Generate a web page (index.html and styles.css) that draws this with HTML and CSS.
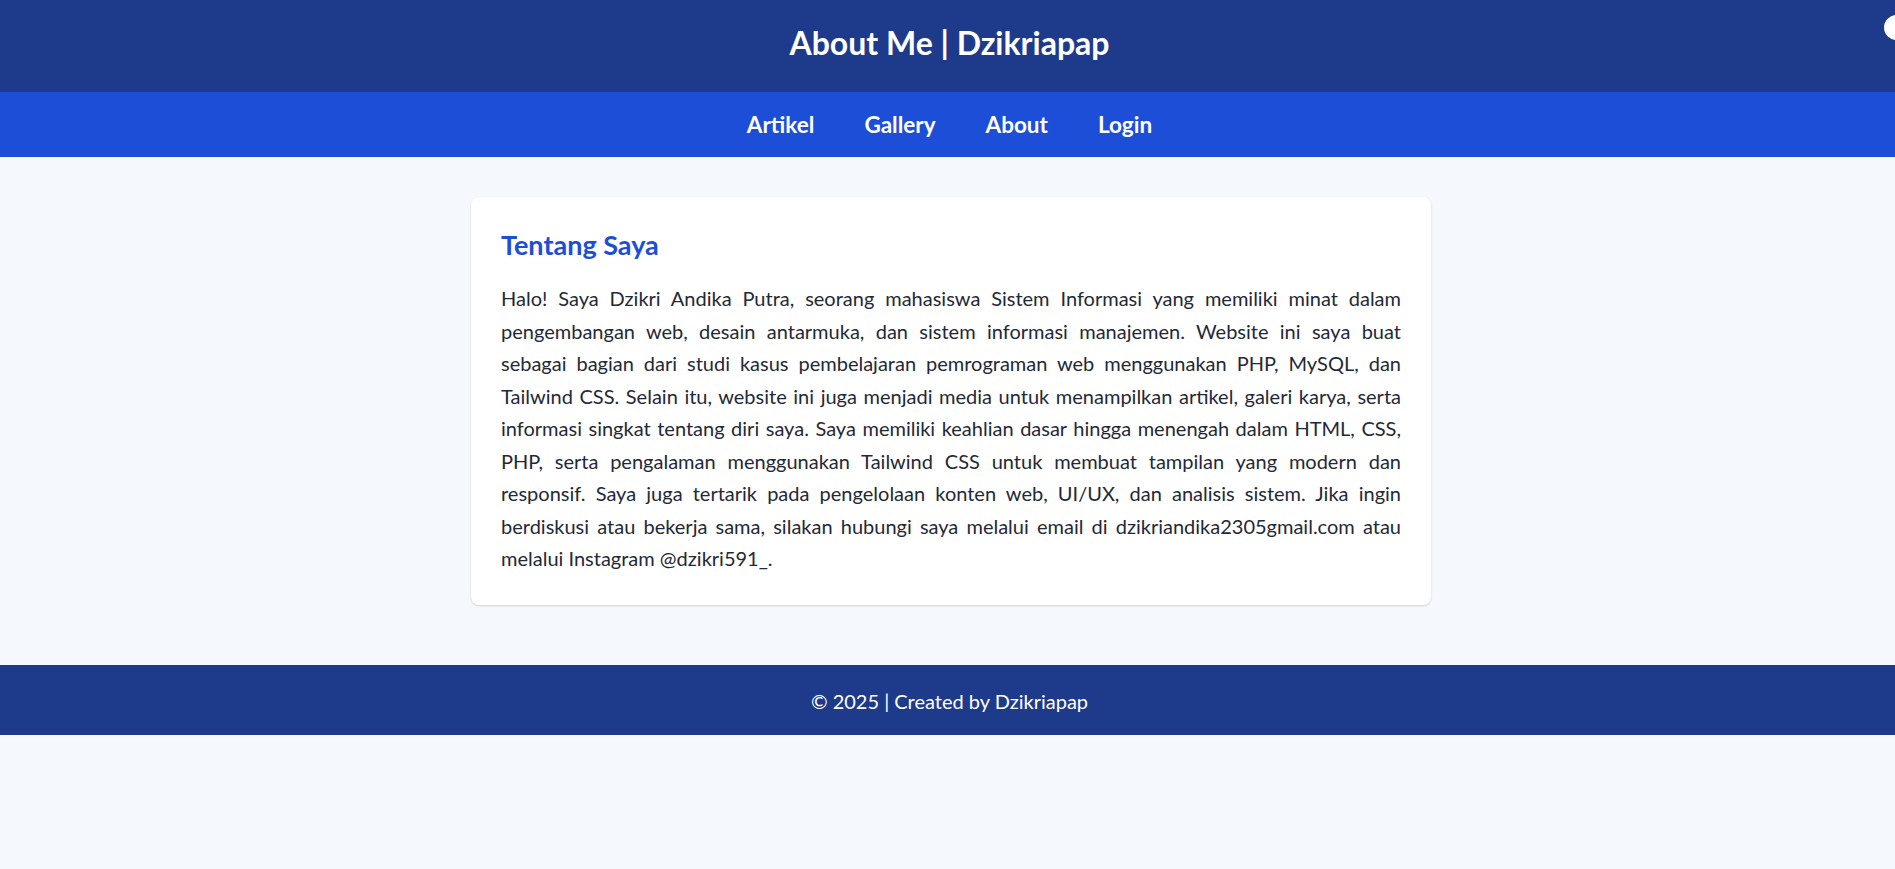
FILE: index.html
```html
<!DOCTYPE html>
<html lang="id">
<head>
<meta charset="utf-8">
<title>About Me | Dzikriapap</title>
<link rel="stylesheet" href="styles.css">
</head>
<body>
<header class="site-header">
  <h1 class="site-title">About Me | Dzikriapap</h1>
  <span class="toggle-knob"></span>
</header>
<nav class="site-nav">
  <a href="#" class="nav-link">Artikel</a>
  <a href="#" class="nav-link">Gallery</a>
  <a href="#" class="nav-link">About</a>
  <a href="#" class="nav-link">Login</a>
</nav>
<main class="main">
  <section class="card">
    <h2 class="card-title">Tentang Saya</h2>
    <p class="card-text">Halo! Saya Dzikri Andika Putra, seorang mahasiswa Sistem Informasi yang memiliki minat dalam pengembangan web, desain antarmuka, dan sistem informasi manajemen. Website ini saya buat sebagai bagian dari studi kasus pembelajaran pemrograman web menggunakan PHP, MySQL, dan Tailwind CSS. Selain itu, website ini juga menjadi media untuk menampilkan artikel, galeri karya, serta informasi singkat tentang diri saya. Saya memiliki keahlian dasar hingga menengah dalam HTML, CSS, PHP, serta pengalaman menggunakan Tailwind CSS untuk membuat tampilan yang modern dan responsif. Saya juga tertarik pada pengelolaan konten web, UI/UX, dan analisis sistem. Jika ingin berdiskusi atau bekerja sama, silakan hubungi saya melalui email di dzikriandika2305gmail.com atau melalui Instagram @dzikri591_.</p>
  </section>
</main>
<footer class="site-footer">
  <p class="footer-text">© 2025 | Created by Dzikriapap</p>
</footer>
</body>
</html>
```
FILE: styles.css
```css
* { box-sizing: border-box; }
html, body { margin: 0; padding: 0; }
body {
  background: #f5f8fc;
  font-family: "Lato", "Liberation Sans", sans-serif;
  color: #1f2937;
  overflow-x: hidden;
  min-height: 869px;
}
.site-header {
  position: relative;
  height: 92px;
  background: #1e3a8a;
  display: flex;
  align-items: center;
  justify-content: center;
  overflow: hidden;
  padding-left: 4px;
}
.site-title {
  margin: 0;
  color: #ffffff;
  font-size: 32px;
  font-weight: 700;
  line-height: 40px;
  padding-bottom: 6px;
}
.toggle-knob {
  position: absolute;
  top: 15px;
  right: -14px;
  width: 25px;
  height: 25px;
  border-radius: 50%;
  background: #ffffff;
}
.site-nav {
  height: 65px;
  background: #1d4ed8;
  display: flex;
  align-items: center;
  justify-content: center;
  gap: 50px;
  padding-left: 4px;
}
.nav-link {
  color: #ffffff;
  text-decoration: none;
  font-size: 22.5px;
  font-weight: 700;
  line-height: 35px;
}
.main {
  padding: 40px 0 60px 7px;
  display: flex;
  justify-content: center;
}
.card {
  width: 960px;
  background: #ffffff;
  border-radius: 8px;
  box-shadow: 0 1px 3px rgba(0,0,0,0.10), 0 1px 2px rgba(0,0,0,0.06);
  padding: 30px;
}
.card-title {
  margin: 0 0 20px;
  color: #1d4ed8;
  font-size: 27px;
  font-weight: 700;
  line-height: 35px;
}
.card-text {
  margin: 0;
  font-size: 20px;
  line-height: 32.5px;
  text-align: justify;
  color: #1f2937;
}
.site-footer {
  height: 70px;
  background: #1e3a8a;
  display: flex;
  align-items: center;
  justify-content: center;
  padding-left: 4px;
}
.footer-text {
  margin: 0;
  color: #ffffff;
  font-size: 20px;
  line-height: 30px;
  padding-top: 2px;
}
```
